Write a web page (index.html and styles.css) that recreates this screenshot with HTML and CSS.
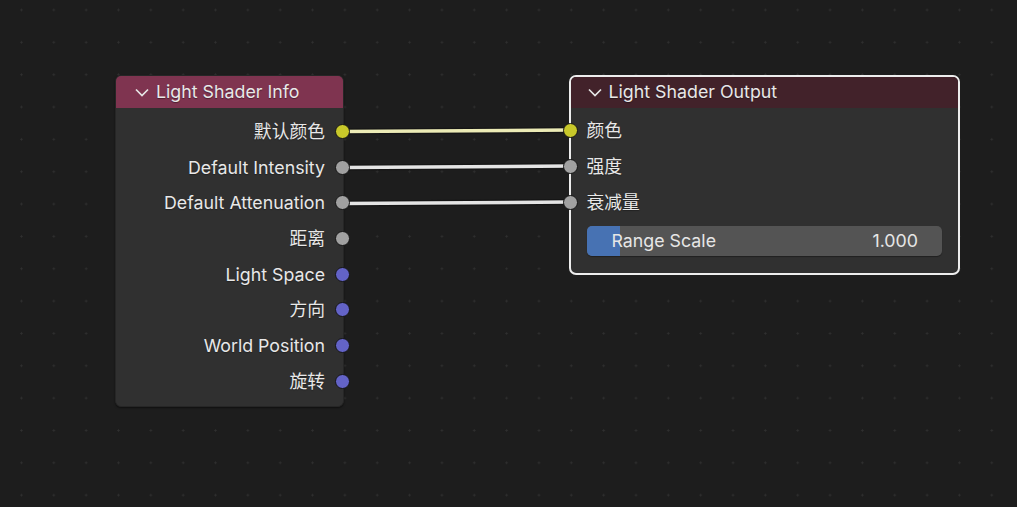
FILE: index.html
```html
<!DOCTYPE html>
<html>
<head>
<meta charset="utf-8">
<link rel="stylesheet" href="styles.css">
</head>
<body>
<div class="canvas">
  <svg class="links" width="1017" height="507" viewBox="0 0 1017 507">
    <g stroke-linecap="butt">
      <line x1="342" y1="131.5" x2="570" y2="130" stroke="#151515" stroke-width="6"/>
      <line x1="342" y1="131.5" x2="570" y2="130" stroke="#ecebb6" stroke-width="3.5"/>
      <line x1="342" y1="167.5" x2="570" y2="166" stroke="#151515" stroke-width="6"/>
      <line x1="342" y1="167.5" x2="570" y2="166" stroke="#e4e4e4" stroke-width="3.5"/>
      <line x1="342" y1="203.5" x2="570" y2="202" stroke="#151515" stroke-width="6"/>
      <line x1="342" y1="203.5" x2="570" y2="202" stroke="#e4e4e4" stroke-width="3.5"/>
    </g>
  </svg>

  <div class="node node-info">
    <div class="node-header header-info">
      <span class="chev"><svg width="14" height="9" viewBox="0 0 14 9"><path d="M1 1.5 L7 7.5 L13 1.5" fill="none" stroke="#e6e6e6" stroke-width="1.7"/></svg></span>
      <span class="title">Light Shader Info</span>
    </div>
    <div class="node-body out-body">
      <div class="row out"><span class="label">默认颜色</span><span class="sock yellow"></span></div>
      <div class="row out"><span class="label">Default Intensity</span><span class="sock gray"></span></div>
      <div class="row out"><span class="label">Default Attenuation</span><span class="sock gray"></span></div>
      <div class="row out"><span class="label">距离</span><span class="sock gray"></span></div>
      <div class="row out"><span class="label">Light Space</span><span class="sock blue"></span></div>
      <div class="row out"><span class="label">方向</span><span class="sock blue"></span></div>
      <div class="row out"><span class="label">World Position</span><span class="sock blue"></span></div>
      <div class="row out"><span class="label">旋转</span><span class="sock blue"></span></div>
    </div>
  </div>

  <div class="node node-output">
    <div class="node-header header-output">
      <span class="chev"><svg width="14" height="9" viewBox="0 0 14 9"><path d="M1 1.5 L7 7.5 L13 1.5" fill="none" stroke="#e6e6e6" stroke-width="1.7"/></svg></span>
      <span class="title">Light Shader Output</span>
    </div>
    <div class="node-body in-body">
      <div class="row in"><span class="sock yellow"></span><span class="label">颜色</span></div>
      <div class="row in"><span class="sock gray"></span><span class="label">强度</span></div>
      <div class="row in"><span class="sock gray"></span><span class="label">衰减量</span></div>
      <div class="slider">
        <div class="slider-fill" style="width: 9.3%"></div>
        <span class="slider-label">Range Scale</span>
        <span class="slider-value">1.000</span>
      </div>
    </div>
  </div>
</div>
</body>
</html>
```

FILE: styles.css
```css
html, body {
  margin: 0;
  padding: 0;
  background: #1d1d1d;
}

.canvas {
  position: relative;
  width: 1017px;
  height: 507px;
  overflow: hidden;
  background-color: #1d1d1d;
  background-image: radial-gradient(circle, #303030 0.9px, transparent 1.2px);
  background-size: 32.35px 32.35px;
  background-position: 5.3px -6.2px;
  font-family: Inter, "Noto Sans CJK SC", sans-serif;
  font-size: 17.8px;
  color: #e6e6e6;
}

.links {
  position: absolute;
  left: 0;
  top: 0;
}

.node {
  position: absolute;
  box-sizing: border-box;
  background: #303030;
  display: flex;
  flex-direction: column;
}

.node-info {
  left: 115px;
  top: 75px;
  width: 229px;
  height: 332px;
  border-radius: 6px;
  border: 1px solid #262626;
  box-shadow: 0 1px 2px rgba(0,0,0,0.5);
}

.node-output {
  left: 568.5px;
  top: 74.5px;
  width: 391.5px;
  height: 200px;
  border-radius: 7px;
  border: 2px solid #ededed;
}

.node-header {
  display: flex;
  align-items: center;
  padding-left: 19px;
  gap: 7px;
  flex: none;
}

.header-info {
  height: 32px;
  background: #7f3450;
  border-radius: 5px 5px 0 0;
}

.header-output {
  height: 31px;
  background: #42222a;
  padding-left: 17px;
  border-radius: 5px 5px 0 0;
}

.chev {
  display: flex;
  align-items: center;
  width: 14px;
  height: 12px;
  margin-top: 1px;
}

.title {
  color: #e8e8e8;
  line-height: 1;
  text-shadow: 0 1px 1px rgba(0,0,0,0.4);
}

.node-body {
  display: flex;
  flex-direction: column;
}

.out-body {
  padding-top: 6px;
}

.in-body {
  padding-top: 5px;
}

.row {
  height: 35.7px;
  display: flex;
  align-items: center;
  position: relative;
}

.row.out {
  justify-content: flex-end;
  padding-right: 18px;
}

.row.in {
  padding-left: 16px;
  height: 36px;
}

.label {
  line-height: 1;
  white-space: nowrap;
  color: #e8e8e8;
  text-shadow: 0 1px 1px rgba(0,0,0,0.3);
}

.sock {
  position: absolute;
  width: 13px;
  height: 13px;
  border-radius: 50%;
  border: 1px solid #141414;
  box-sizing: content-box;
}

.row.out .sock {
  right: -7px;
  top: 10px;
}

.row.in .sock {
  left: -8px;
  top: 10.5px;
}

.yellow { background: #c8c82a; }
.gray   { background: #a1a1a1; }
.blue   { background: #6363c7; }

.slider {
  position: relative;
  margin: 5px 16px 0 16px;
  height: 30px;
  border-radius: 5px;
  background: #545454;
  overflow: hidden;
  display: flex;
  align-items: center;
  justify-content: space-between;
  padding: 0 24px 0 25px;
  box-shadow: 0 1px 1px rgba(0,0,0,0.35);
}

.slider-fill {
  position: absolute;
  left: 0;
  top: 0;
  bottom: 0;
  background: #4772b3;
}

.slider-label,
.slider-value {
  position: relative;
  line-height: 1;
  color: #e6e6e6;
}
```
